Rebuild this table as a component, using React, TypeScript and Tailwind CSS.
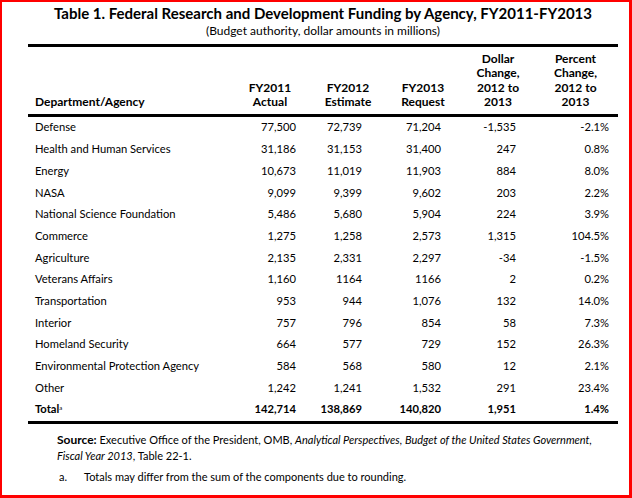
const rows: [string, string, string, string, string, string][] = [
  ["Defense", "77,500", "72,739", "71,204", "-1,535", "-2.1%"],
  ["Health and Human Services", "31,186", "31,153", "31,400", "247", "0.8%"],
  ["Energy", "10,673", "11,019", "11,903", "884", "8.0%"],
  ["NASA", "9,099", "9,399", "9,602", "203", "2.2%"],
  ["National Science Foundation", "5,486", "5,680", "5,904", "224", "3.9%"],
  ["Commerce", "1,275", "1,258", "2,573", "1,315", "104.5%"],
  ["Agriculture", "2,135", "2,331", "2,297", "-34", "-1.5%"],
  ["Veterans Affairs", "1,160", "1164", "1166", "2", "0.2%"],
  ["Transportation", "953", "944", "1,076", "132", "14.0%"],
  ["Interior", "757", "796", "854", "58", "7.3%"],
  ["Homeland Security", "664", "577", "729", "152", "26.3%"],
  ["Environmental Protection Agency", "584", "568", "580", "12", "2.1%"],
  ["Other", "1,242", "1,241", "1,532", "291", "23.4%"],
];

const grid = "grid grid-cols-[208px_68px_88px_62px_88px_67px]";

function NumCells({ vals }: { vals: string[] }) {
  return (
    <>
      <div className="text-right pr-[8px]">{vals[0]}</div>
      <div className="text-right pr-[30px]">{vals[1]}</div>
      <div className="text-right pr-[13px]">{vals[2]}</div>
      <div className="text-right pr-[26px]">{vals[3]}</div>
      <div className="text-right">{vals[4]}</div>
    </>
  );
}

export default function App() {
  return (
    <main className="w-[632px] h-[498px] bg-white text-black border-t-2 border-l-2 border-r-[3px] border-b-[3px] border-[#f00] font-['Lato',_'Liberation_Sans',_sans-serif] overflow-hidden">
      <div className="ml-[26px] w-[590px]">
        <h1 className="text-center font-bold text-[15px] leading-[20px] pt-[1px]">
          Table 1. Federal Research and Development Funding by Agency, FY2011-FY2013
        </h1>
        <p className="text-center text-[12px] leading-[16px]">
          (Budget authority, dollar amounts in millions)
        </p>

        <div className="mt-[5px] border-t-[3px] border-black" />
        <div className={`${grid} h-[67px] items-end pb-[4px] text-[12px] leading-[14.6px] font-bold`}>
          <div className="pl-[7px]">Department/Agency</div>
          <div className="text-center">FY2011<br />Actual</div>
          <div className="text-center">FY2012<br />Estimate</div>
          <div className="text-center">FY2013<br />Request</div>
          <div className="text-center">Dollar<br />Change,<br />2012 to<br />2013</div>
          <div className="text-center">Percent<br />Change,<br />2012 to<br />2013</div>
        </div>
        <div className="border-t-[3px] border-black" />

        <div className="text-[11.2px]">
          {rows.map((r) => (
            <div key={r[0]} className={`${grid} h-[21.7px] items-center`}>
              <div className="pl-[7px]">{r[0]}</div>
              <NumCells vals={r.slice(1)} />
            </div>
          ))}
          <div className={`${grid} h-[21.7px] items-center font-bold`}>
            <div className="pl-[7px]">
              Total<sup className="text-[6px] font-normal">a</sup>
            </div>
            <NumCells vals={["142,714", "138,869", "140,820", "1,951", "1.4%"]} />
          </div>
        </div>
        <div className="border-t-[3px] border-black" />

        <div className="pl-[29px] pr-[14px] mt-[8px] text-[11px] leading-[16px]">
          <p>
            <span className="font-bold text-[12px] leading-[16px]">Source:</span> Executive Office of the President, OMB,{" "}
            <i>Analytical Perspectives</i>, <i>Budget of the United States Government, Fiscal Year 2013</i>, Table 22-1.
          </p>
          <p className="mt-[5px] flex">
            <span className="w-[27px] pl-[2px]">a.</span>
            <span>Totals may differ from the sum of the components due to rounding.</span>
          </p>
        </div>
      </div>
    </main>
  );
}
